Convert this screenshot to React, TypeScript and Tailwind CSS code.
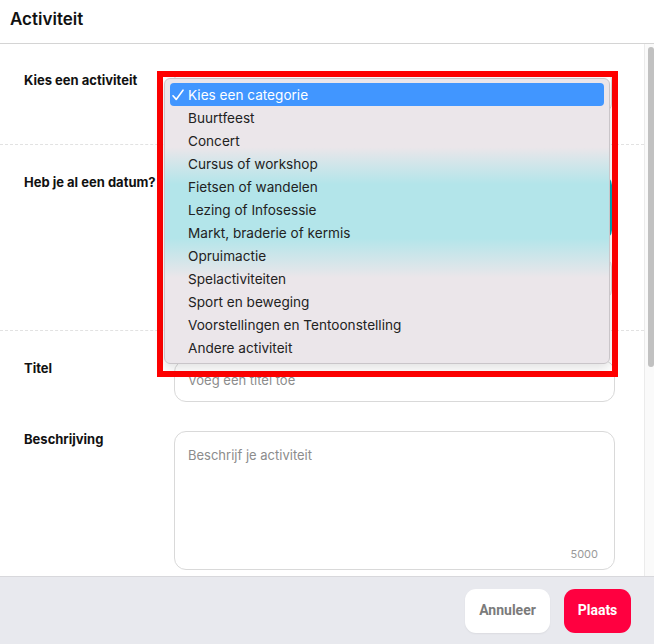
import React from "react";

const options = [
  "Kies een categorie",
  "Buurtfeest",
  "Concert",
  "Cursus of workshop",
  "Fietsen of wandelen",
  "Lezing of Infosessie",
  "Markt, braderie of kermis",
  "Opruimactie",
  "Spelactiviteiten",
  "Sport en beweging",
  "Voorstellingen en Tentoonstelling",
  "Andere activiteit",
];

export default function App() {
  return (
    <div className="relative w-[654px] h-[644px] flex flex-col bg-white overflow-hidden font-['Inter',sans-serif] text-[#111]">
      <header className="h-[44px] shrink-0 border-b border-[#d4d4d4] px-[10px] pb-[4px] flex items-center">
        <h1 className="text-[17px] font-semibold text-[#111]">Activiteit</h1>
      </header>

      <div className="flex-1 flex min-h-0">
        <div className="flex-1 flex flex-col overflow-hidden">
          {/* Row 1 */}
          <div className="h-[101px] shrink-0 flex pl-[24px] pr-[32px] pt-[28px] border-b border-dashed border-[#e2e2e2]">
            <div className="w-[150px] shrink-0 text-[13px] leading-[16px] font-bold">Kies een activiteit</div>
            <div className="flex-1 h-[40px] border border-[#d9d9d9] rounded-[8px] flex items-center justify-end pr-[2px]">
              <span className="text-[8px] text-black">▾</span>
            </div>
          </div>
          {/* Row 2 */}
          <div className="h-[186px] shrink-0 flex pl-[24px] pr-[32px] pt-[29px] border-b border-dashed border-[#e2e2e2]">
            <div className="w-[150px] shrink-0 text-[13px] leading-[16px] font-bold">Heb je al een datum?</div>
            <div className="flex-1 flex flex-col gap-[17px] pt-[1px]">
              <div className="h-[65px] rounded-[10px] bg-[#00a3b5]" />
              <div className="h-[43px] border border-[#d9d9d9] rounded-[10px]" />
            </div>
          </div>
          {/* Row 3 */}
          <div className="flex flex-col gap-[29px] pl-[24px] pr-[29px] pt-[29px]">
            <div className="flex">
              <div className="w-[150px] shrink-0 text-[13px] leading-[16px] font-bold">Titel</div>
              <div className="flex-1 h-[42px] border border-[#d9d9d9] rounded-[12px] px-[13px] flex items-center text-[13px] text-[#8c8c8c]">
                Voeg een titel toe
              </div>
            </div>
            <div className="flex">
              <div className="w-[150px] shrink-0 text-[13px] leading-[16px] font-bold">Beschrijving</div>
              <div className="relative flex-1 h-[139px] border border-[#d9d9d9] rounded-[12px] px-[13px] pt-[15px] text-[13px] leading-[16px] text-[#8c8c8c]">
                Beschrijf je activiteit
                <span className="absolute right-[16px] bottom-[7px] text-[11px] text-[#9a9a9a]">5000</span>
              </div>
            </div>
          </div>
        </div>
        {/* scrollbar */}
        <div className="w-[10px] shrink-0 border-l border-[#ebebeb] bg-[#fafafa] pt-[3px] pl-[3px]">
          <div className="w-[6px] h-[320px] rounded-full bg-[#c1c1c1]" />
        </div>
      </div>

      <footer className="h-[68px] shrink-0 border-t border-[#d8d8dc] bg-[#e8e9ee] flex items-center justify-end gap-[14px] pr-[23px] font-['Roboto',sans-serif]">
        <button className="w-[85px] h-[44px] rounded-[11px] bg-white text-[14px] font-bold text-[#7b7b7b] shadow-[0_1px_2px_rgba(0,0,0,0.06)]">
          Annuleer
        </button>
        <button className="w-[67px] h-[44px] rounded-[11px] bg-[#ff0040] text-[14px] font-bold text-white">
          Plaats
        </button>
      </footer>

      {/* Dropdown overlay */}
      <div className="absolute left-[157px] top-[71px] w-[461px] h-[306px] border-[6px] border-[#ff0000] pointer-events-none" />
      <div className="absolute left-[164px] top-[78px] w-[446px] h-[286px] rounded-[6px] border border-[#c9c5c9] shadow-[0_4px_12px_rgba(0,0,0,0.12)] bg-[linear-gradient(to_bottom,#ebe6ea_0%,#ebe6ea_24%,#b3e5ea_37%,#b3e5ea_56%,#ebe6ea_70%,#ebe6ea_100%)] px-[5px] pt-[4px] pb-[4px] font-['Inter',sans-serif]">
        {options.map((o, i) => (
          <div
            key={o}
            className={
              i === 0
                ? "h-[23px] rounded-[4px] bg-[#4196ff] text-white flex items-center text-[13.6px] leading-[23px] pt-[1px]"
                : "h-[23px] flex items-center text-[13.6px] leading-[23px] text-[#222] pt-[1px]"
            }
          >
            <span className="w-[18px] pl-[2px] flex items-center">
              {i === 0 ? (
                <svg width="12" height="12" viewBox="0 0 12 12" fill="none">
                  <path d="M1 6.8 L4.2 10.4 L11 1.2" stroke="white" strokeWidth="1.6" strokeLinecap="round" strokeLinejoin="round" />
                </svg>
              ) : null}
            </span>
            <span>{o}</span>
          </div>
        ))}
      </div>
    </div>
  );
}
